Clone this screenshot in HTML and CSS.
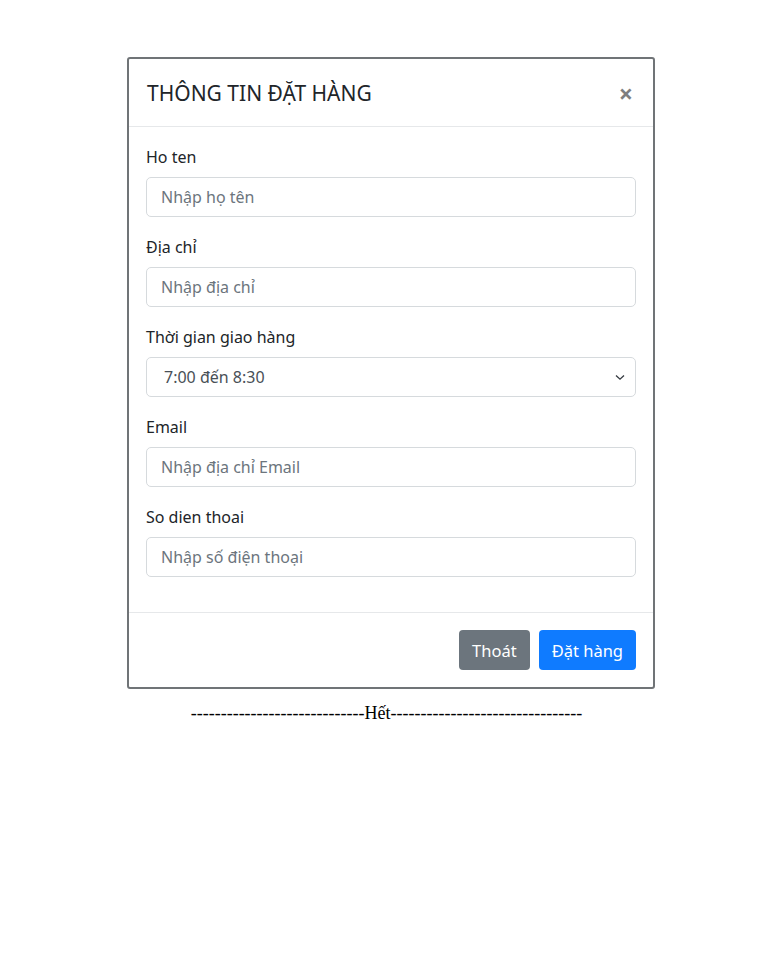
FILE: index.html
```html
<!DOCTYPE html>
<html lang="vi">
<head>
<meta charset="utf-8">
<title>Thông tin đặt hàng</title>
<link rel="stylesheet" href="styles.css">
</head>
<body>
<div class="page">
  <div class="shot">
    <div class="modal-header">
      <h5 class="modal-title">THÔNG TIN ĐẶT HÀNG</h5>
      <span class="close">×</span>
    </div>
    <div class="modal-body">
      <div class="group">
        <label class="label">Ho ten</label>
        <div class="input placeholder">Nhập họ tên</div>
      </div>
      <div class="group">
        <label class="label">Địa chỉ</label>
        <div class="input placeholder">Nhập địa chỉ</div>
      </div>
      <div class="group">
        <label class="label">Thời gian giao hàng</label>
        <div class="input select">
          <span class="value">7:00 đến 8:30</span>
          <svg class="chev" width="10" height="7" viewBox="0 0 10 7"><path d="M1 1.5 L5 5.2 L9 1.5" fill="none" stroke="#343a40" stroke-width="1.3"/></svg>
        </div>
      </div>
      <div class="group">
        <label class="label">Email</label>
        <div class="input placeholder">Nhập địa chỉ Email</div>
      </div>
      <div class="group">
        <label class="label">So dien thoai</label>
        <div class="input placeholder">Nhập số điện thoại</div>
      </div>
    </div>
    <div class="modal-footer">
      <button class="btn btn-secondary">Thoát</button>
      <button class="btn btn-primary">Đặt hàng</button>
    </div>
  </div>
  <p class="caption">-----------------------------Hết--------------------------------</p>
</div>
</body>
</html>
```

FILE: styles.css
```css
html, body {
  margin: 0;
  padding: 0;
  background: #ffffff;
}

.page {
  display: flex;
  flex-direction: column;
  padding-top: 57px;
}

.shot {
  margin-left: 127px;
  width: 524px;
  border: 2px solid #707477;
  border-radius: 3px;
  background: #fff;
  font-family: "Noto Sans", "Open Sans", sans-serif;
  color: #212529;
}

.modal-header {
  display: flex;
  align-items: center;
  justify-content: space-between;
  padding: 19px 20px 18px 18px;
  border-bottom: 1px solid #e6e8ea;
}

.modal-title {
  margin: 0;
  font-size: 21px;
  line-height: 30px;
  font-weight: 400;
  color: #212529;
}

.close {
  font-size: 25px;
  line-height: 30px;
  font-weight: 700;
  color: #000;
  opacity: 0.5;
}

.modal-body {
  padding: 18px 17px 17px 17px;
}

.group {
  display: flex;
  flex-direction: column;
  margin-bottom: 18px;
}

.label {
  font-size: 16px;
  line-height: 25px;
  margin-bottom: 7px;
  color: #212529;
}

.input {
  box-sizing: border-box;
  height: 40px;
  border: 1px solid #d6dadd;
  border-radius: 5px;
  padding: 0 14px;
  display: flex;
  align-items: center;
  font-size: 16px;
}

.placeholder {
  color: #6c757d;
}

.select {
  justify-content: space-between;
  padding: 0 10px 0 17px;
  color: #495057;
}

.modal-footer {
  display: flex;
  justify-content: flex-end;
  gap: 9px;
  padding: 17px;
  border-top: 1px solid #e6e8ea;
}

.btn {
  height: 40px;
  padding: 0 13px;
  border: none;
  border-radius: 4px;
  font-family: "Noto Sans", "Open Sans", sans-serif;
  font-size: 16.5px;
  color: #fff;
}

.btn-secondary {
  background: #6c757d;
}

.btn-primary {
  background: #0f7bff;
}

.caption {
  margin: 14px 0 0 0;
  padding-left: 9px;
  text-align: center;
  font-family: "Liberation Serif", "Times New Roman", serif;
  font-size: 18px;
  color: #000;
}
```
